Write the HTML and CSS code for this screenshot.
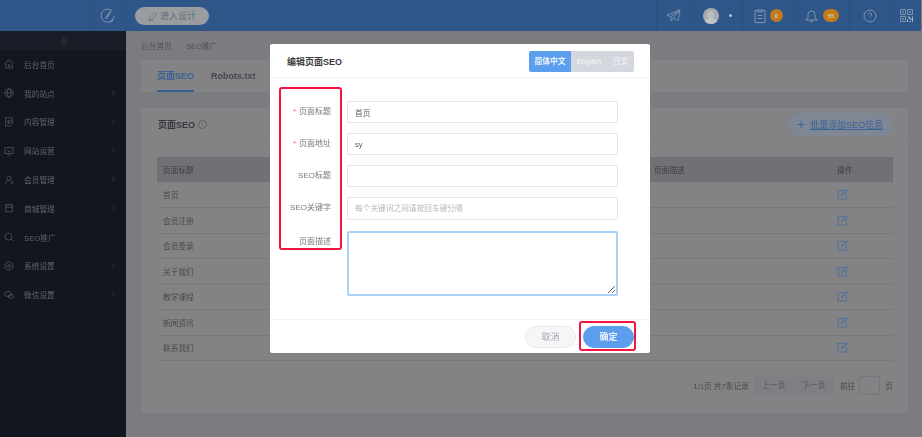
FILE: index.html
```html
<!DOCTYPE html>
<html lang="zh-CN">
<head>
<meta charset="utf-8">
<title>页面SEO</title>
<link rel="stylesheet" href="styles.css">
</head>
<body>
<div class="app">
  <header class="topbar">
    <div class="top-left">
      <div class="top-cell compass"><svg width="16" height="16" viewBox="0 0 16 16" fill="none" stroke="#7d93ad" stroke-width="1"><path d="M12.500 3.500A6.500 6.500 0 1 0 14 8"/><path d="M11 2.500 6.500 11l-1-1z"/><path d="M10 14a3 3 0 0 0 3-3"/></svg></div>
      <div class="design-btn"><svg width="10" height="10" viewBox="0 0 10 10" fill="none" stroke="#6f8092" stroke-width="1"><path d="M1 9l1-3 5-5 2 2-5 5zM0 9.600h6"/></svg>进入设计</div>
    </div>
    <div class="top-right">
      <div class="top-cell t-send"><svg width="15" height="13" viewBox="0 0 15 13" fill="none" stroke="#7d93ad" stroke-width="1"><path d="M14 .8 1 6.200l3.500 1.600zM14 .8l-2 11-4.800-3zM5 8v4l2.500-3"/></svg></div>
      <div class="top-cell t-user"><span class="avatar"><span class="avatar-head"></span><span class="avatar-body"></span></span><span class="caret"></span></div>
      <div class="top-cell t-note"><svg width="12" height="14" viewBox="0 0 12 14" fill="none" stroke="#7d93ad" stroke-width="1"><path d="M3.500 1.500H1v12h10v-12H8.500M3.500 1h5v2h-5zM3.500 6.500h5M3.500 9.500h5"/></svg><span class="badge b-small">0</span></div>
      <div class="top-cell t-bell"><svg width="13" height="14" viewBox="0 0 13 14" fill="none" stroke="#7d93ad" stroke-width="1"><path d="M3 9V5.500a3.500 3.500 0 0 1 7 0V9l2.500 2H.5zM5 12.500h3"/></svg><span class="badge b-wide">55</span></div>
      <div class="top-cell t-help"><svg width="14" height="14" viewBox="0 0 14 14" fill="none" stroke="#7d93ad" stroke-width="1"><circle cx="7" cy="7" r="6"/><path d="M5.300 5.500a1.700 1.700 0 1 1 2.500 1.500c-.6.300-.8.700-.8 1.300M7 10v.8"/></svg></div>
      <div class="top-cell t-qr"><svg width="13" height="13" viewBox="0 0 13 13" fill="none" stroke="#7d93ad" stroke-width="1"><path d="M.5.500h5v5h-5zM7.500.500h5v5h-5zM.5 7.500h5v5h-5z"/><path d="M2.500 2.500h1v1h-1zM9.500 2.500h1v1h-1zM2.500 9.500h1v1h-1z"/><path d="M7.500 8h2v2h3M12.500 7.500V13M7.500 10.500V13M9.500 12.500h1.500" stroke="#aab6c4"/></svg></div>
    </div>
  </header>
  <div class="shell">
    <aside class="sidebar">
      <div class="collapse">·||</div>
      <nav class="menu">
        <a class="menu-item"><svg class="mi" viewBox="0 0 12 12"><path d="M2 11V4.500L6 1l4 3.500V11zM5 7h2v2H5z"/></svg>后台首页</a>
        <a class="menu-item"><svg class="mi" viewBox="0 0 12 12"><circle cx="6" cy="6" r="5"/><ellipse cx="6" cy="6" rx="2.200" ry="5"/><path d="M1 6h10"/></svg>我的站点<i class="chev"></i></a>
        <a class="menu-item"><svg class="mi" viewBox="0 0 12 12"><path d="M2 1h8v7l-3 3H2zM5 4h2.500a1.300 1.300 0 0 1 0 3H5zM5 4v5"/></svg>内容管理<i class="chev"></i></a>
        <a class="menu-item"><svg class="mi" viewBox="0 0 12 12"><path d="M1 2h10v7H1zM4 11h4M4 5.500l2 1.500 2-1.500"/></svg>网站运营<i class="chev"></i></a>
        <a class="menu-item"><svg class="mi" viewBox="0 0 12 12"><circle cx="6" cy="4" r="2.600"/><path d="M1.500 11c.3-3 2-4.200 4.500-4.200M8 8h3M8 10h3"/></svg>会员管理<i class="chev"></i></a>
        <a class="menu-item"><svg class="mi" viewBox="0 0 12 12"><path d="M2 2h8v8.500H2zM2 5h8M4.500 1v2M7.500 1v2"/></svg>商城管理<i class="chev"></i></a>
        <a class="menu-item"><svg class="mi" viewBox="0 0 12 12"><circle cx="5.500" cy="5.500" r="4.200"/><path d="M8.500 8.500 11 11"/></svg>SEO推广</a>
        <a class="menu-item"><svg class="mi" viewBox="0 0 12 12"><path d="M6 .8 10.500 3.400v5.200L6 11.200 1.500 8.600V3.400z"/><circle cx="6" cy="6" r="1.700"/></svg>系统设置<i class="chev"></i></a>
        <a class="menu-item"><svg class="mi" viewBox="0 0 12 12"><ellipse cx="4.800" cy="4.800" rx="3.900" ry="3.200"/><ellipse cx="8.200" cy="7.600" rx="3" ry="2.500"/></svg>微信设置<i class="chev"></i></a>
      </nav>
    </aside>
    <main class="main">
      <div class="crumbs"><span>后台首页</span><span class="sep">/</span><span>SEO推广</span></div>
      <div class="tabs card">
        <span class="tab active">页面SEO</span>
        <span class="tab">Robots.txt</span>
      </div>
      <section class="panel card">
        <div class="panel-head">
          <h2 class="panel-title">页面SEO<span class="info">i</span></h2>
          <a class="bulk"><span class="plus">+</span><span class="bulk-text">批量添加SEO信息</span></a>
        </div>
        <table class="seo-table">
          <thead>
            <tr><th>页面标题</th><th class="c-url"></th><th class="c-desc">页面描述</th><th class="c-op">操作</th></tr>
          </thead>
          <tbody>
            <tr><td>首页</td><td></td><td></td><td><svg class="edit" viewBox="0 0 11 11"><path d="M8 1.500H1v8.500h8.500V4.500M4.500 6.500 5 5l5-4.500.8.800L6 6z"/></svg></td></tr>
            <tr><td>会员注册</td><td></td><td></td><td><svg class="edit" viewBox="0 0 11 11"><path d="M8 1.500H1v8.500h8.500V4.500M4.500 6.500 5 5l5-4.500.8.800L6 6z"/></svg></td></tr>
            <tr><td>会员登录</td><td></td><td></td><td><svg class="edit" viewBox="0 0 11 11"><path d="M8 1.500H1v8.500h8.500V4.500M4.500 6.500 5 5l5-4.500.8.800L6 6z"/></svg></td></tr>
            <tr><td>关于我们</td><td></td><td></td><td><svg class="edit" viewBox="0 0 11 11"><path d="M8 1.500H1v8.500h8.500V4.500M4.500 6.500 5 5l5-4.500.8.800L6 6z"/></svg></td></tr>
            <tr><td>教学课程</td><td></td><td></td><td><svg class="edit" viewBox="0 0 11 11"><path d="M8 1.500H1v8.500h8.500V4.500M4.500 6.500 5 5l5-4.500.8.800L6 6z"/></svg></td></tr>
            <tr><td>新闻资讯</td><td></td><td></td><td><svg class="edit" viewBox="0 0 11 11"><path d="M8 1.500H1v8.500h8.500V4.500M4.500 6.500 5 5l5-4.500.8.800L6 6z"/></svg></td></tr>
            <tr><td>联系我们</td><td></td><td></td><td><svg class="edit" viewBox="0 0 11 11"><path d="M8 1.500H1v8.500h8.500V4.500M4.500 6.500 5 5l5-4.500.8.800L6 6z"/></svg></td></tr>
          </tbody>
        </table>
        <div class="pager">
          <span class="pager-info">1/1页 共7条记录</span>
          <span class="pager-btns"><span class="pg">上一页</span><span class="pg">下一页</span></span>
          <span class="pager-go">前往</span>
          <span class="pg-input"></span>
          <span class="pager-go">页</span>
        </div>
      </section>
    </main>
  </div>
</div>

<div class="modal-layer">
  <div class="modal">
    <div class="modal-head">
      <h3 class="modal-title">编辑页面SEO</h3>
      <div class="langs"><span class="lang on">简体中文</span><span class="lang l-en">English</span><span class="lang l-jp">日文</span></div>
    </div>
    <form class="modal-body">
      <div class="row"><label class="lbl"><i>*</i>页面标题</label><input class="field" value="首页"></div>
      <div class="row"><label class="lbl"><i>*</i>页面地址</label><input class="field" value="sy"></div>
      <div class="row"><label class="lbl">SEO标题</label><input class="field"></div>
      <div class="row row-key"><label class="lbl">SEO关键字</label><input class="field" placeholder="每个关键词之间请按回车键分隔"></div>
      <div class="row row-area"><label class="lbl">页面描述</label><textarea class="field area"></textarea></div>
      <div class="mark mark-labels"></div>
    </form>
    <div class="modal-foot">
      <button type="button" class="btn btn-cancel">取消</button>
      <button type="button" class="btn btn-ok">确定</button>
      <div class="mark mark-ok"></div>
    </div>
  </div>
</div>
</body>
</html>
```
FILE: styles.css
```css
* { box-sizing: border-box; }
html, body { margin: 0; height: 100%; overflow: hidden; }
body {
  background: #7b7c7f;
  font-family: "Liberation Sans", "Noto Sans CJK SC", sans-serif;
  font-size: 7.7px;
  color: #4a4b4d;
  filter: blur(0.55px);
}
.app { display: flex; flex-direction: column; height: 437px; width: 921px; }

/* top bar */
.topbar { height: 31px; background: #2e5688; display: flex; justify-content: space-between; flex: none; }
.top-left, .top-right { display: flex; align-items: center; }
.top-cell { display: flex; align-items: center; justify-content: center; height: 31px; border-left: 1px solid #2b5080; }
.compass { width: 36px; margin-left: 90px; border-right: 1px solid #2b5080; }
.design-btn {
  margin-left: 9px; width: 74px; height: 18px; border-radius: 9px; background: #9a9d9f;
  color: #5f6f80; font-size: 9px; display: flex; align-items: center; justify-content: center; gap: 2px;
}
.t-send { width: 34px; }
.t-user { width: 52px; gap: 10px; padding-left: 1px; }
.t-note { width: 52px; gap: 4px; }
.t-bell { width: 55px; gap: 5px; }
.t-help { width: 41px; }
.t-qr { width: 31px; }
.avatar { width: 16px; height: 16px; border-radius: 50%; background: #a7abaf; display: block; overflow: hidden; }
.avatar-head { display: block; width: 7px; height: 7px; margin: 3px auto 0; border-radius: 50%; background: #bcbfc2; }
.avatar-body { display: block; width: 12px; height: 8px; margin: 0 auto; border-radius: 50%; background: #c2c5c8; }
.caret { width: 3px; height: 3px; border-radius: 50%; background: #b8c3d0; }
.badge { background: #c37a1d; color: #d8c8a8; font-size: 6px; font-weight: bold; height: 13px; border-radius: 7px; display: flex; align-items: center; justify-content: center; }
.b-small { width: 13px; }
.b-wide { width: 16px; }

.shell { display: flex; flex: 1; min-height: 0; }

/* sidebar */
.sidebar { width: 126px; background: #11161f; flex: none; color: #5b606a; }
.collapse { height: 19px; background: #191d27; text-align: center; line-height: 19px; font-size: 7px; color: #454a53; }
.menu-item { height: 28.8px; display: flex; align-items: center; padding-left: 4px; position: relative; font-size: 7.7px; color: #5e636c; }
.mi { width: 10px; height: 10px; margin-right: 10px; fill: none; stroke: #4e535c; stroke-width: 1; }
.chev { position: absolute; left: 110px; top: 12px; width: 4px; height: 4px; border-top: 1px solid #262b35; border-right: 1px solid #262b35; transform: rotate(45deg); }

/* main */
.main { flex: 1; padding: 0 13px 0 15px; min-width: 0; }
.crumbs { height: 29px; display: flex; align-items: center; gap: 5px; color: #4f5053; padding-bottom: 1px; }
.sep { color: #6c6d70; padding: 0 1px; }
.card { background: #838385; border-radius: 3px; }
.tabs { height: 32px; padding: 0 16px; display: flex; gap: 17px; font-size: 9px; font-weight: bold; }
.tab { height: 32px; line-height: 32px; color: #45474c; }
.tab.active { color: #3b6196; border-bottom: 2px solid #3a5f95; }
.panel { margin-top: 16px; height: 305px; padding: 0 15px 0 16px; }
.panel-head { height: 32px; margin: 0 -15px 0 -16px; padding: 4px 15px 3px 17px; display: flex; justify-content: space-between; align-items: center; border-bottom: 1px solid #7f7f81; }
.panel-title { margin: 0; font-size: 9px; font-weight: bold; color: #37383b; display: flex; align-items: center; gap: 3px; }
.info { width: 9px; height: 9px; border: 1px solid #5f6062; border-radius: 50%; font-size: 6px; font-weight: normal; line-height: 7px; text-align: center; color: #5f6062; }
.bulk { width: 104px; height: 23px; border-radius: 12px; background: #7e8793; color: #3c639b; font-size: 9px; display: flex; align-items: center; padding-left: 8px; gap: 5px; }
.plus { font-size: 14px; line-height: 1; }
.bulk-text { text-decoration: underline; text-decoration-thickness: 1px; }
.seo-table { width: 736px; margin-top: 17px; border-collapse: collapse; table-layout: fixed; color: #48494b; }
.seo-table th { height: 25px; background: #707174; font-weight: normal; text-align: left; padding: 0 6px; color: #3d3e40; }
.seo-table .c-url { width: 250px; }
.seo-table .c-desc { width: 183px; }
.seo-table .c-op { width: 62px; }
.seo-table td { height: 25.5px; padding: 0 6px; border-bottom: 1px solid #79797b; }
.edit { display: block; width: 11px; height: 11px; fill: none; stroke: #4f6f9c; stroke-width: 1; }
.pager { display: flex; align-items: center; justify-content: flex-end; margin-top: 15px; height: 19px; color: #4a4b4d; }
.pager-info { margin-right: 5px; }
.pager-btns { display: flex; margin-right: 6px; }
.pg { width: 40px; height: 18px; background: #7e7f82; line-height: 18px; text-align: center; color: #535457; }
.pg-input { width: 21px; height: 19px; background: #838385; border: 1px solid #757679; border-radius: 2px; margin: 0 5px 0 4px; }

/* modal */
.modal-layer { position: fixed; inset: 0; padding-top: 44px; display: flex; justify-content: center; padding-right: 2px; }
.modal { width: 380px; height: 309px; background: #fff; border-radius: 2px; display: flex; flex-direction: column; }
.modal-head { height: 34px; padding: 7px 16px 0 17px; display: flex; justify-content: space-between; border-bottom: 1px solid #f2f3f5; flex: none; }
.modal-title { margin: 4px 0 0; font-size: 9px; font-weight: bold; color: #3a3b3d; }
.langs { display: flex; height: 21px; border-radius: 2px; overflow: hidden; font-size: 7.7px; font-weight: bold; color: #fff; }
.lang { background: #d4d8de; line-height: 21px; text-align: center; color: #f4f5f7; font-weight: normal; }
.lang.on { width: 42px; background: #5c9fee; color: #eef5fd; font-weight: bold; }
.l-en { width: 36px; }
.l-jp { width: 27px; }
.modal-body { position: relative; flex: 1; padding-top: 23px; }
.row { display: flex; align-items: center; height: 22px; margin-bottom: 10px; }
.row-key { height: 23px; margin-bottom: 11px; }
.row-key .field { height: 23px; }
.row-area { height: 65px; align-items: flex-start; margin-bottom: 0; }
.lbl { width: 61px; text-align: right; color: #77797d; margin-right: 16px; font-size: 8px; padding-bottom: 4px; }
.row-key .lbl { padding-bottom: 5px; }
.lbl i { color: #f0705f; font-style: normal; margin-right: 3px; }
.row-area .lbl { padding-top: 4px; padding-bottom: 0; }
.field { width: 271px; height: 22px; border: 1px solid #e3e5e9; border-radius: 2px; padding: 0 7px; font: inherit; font-size: 7.7px; color: #606266; background: #fff; outline: 0; }
.field::placeholder { color: #b3b6bb; }
.field.area { height: 65px; border: 2px solid #a9d0f6; }
.modal-foot { position: relative; height: 34px; flex: none; border-top: 1px solid #f0f1f3; display: flex; justify-content: flex-end; align-items: center; gap: 7px; padding: 0 16px 0 0; }
.btn { width: 51px; height: 22px; border-radius: 11px; border: 1px solid #e8eaee; font: inherit; font-size: 9px; padding: 0; }
.btn-cancel { background: #f5f6f8; color: #a4a7ac; }
.btn-ok { background: #5c9ded; border-color: #5c9ded; color: #e9f2fd; font-weight: bold; }

/* annotation marks */
.mark { position: absolute; border: 2px solid #f5143f; border-radius: 3px; pointer-events: none; }
.mark-labels { left: 9px; top: 9px; width: 63px; height: 163px; }
.mark-ok { right: 14px; top: 1px; width: 57px; height: 30px; }
```
